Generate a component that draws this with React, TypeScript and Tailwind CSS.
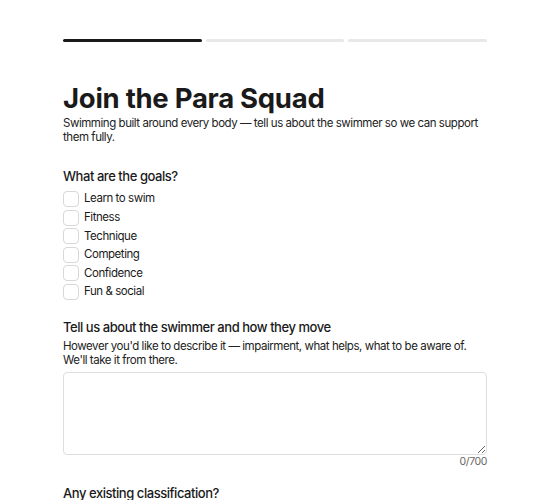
import React, { useState } from "react";

const goals = ["Learn to swim", "Fitness", "Technique", "Competing", "Confidence", "Fun & social"];

function Progress() {
  return (
    <div className="flex gap-[4px]">
      <div className="h-[3px] flex-1 rounded-full bg-[#1a1a1a]" />
      <div className="h-[3px] flex-1 rounded-full bg-[#e8e8e8]" />
      <div className="h-[3px] flex-1 rounded-full bg-[#e8e8e8]" />
    </div>
  );
}

export default function App() {
  const [checked, setChecked] = useState<Record<string, boolean>>({});
  const [about, setAbout] = useState("");

  return (
    <div
      className="min-h-screen bg-white text-[#1a1a1a]"
      style={{ fontFamily: "Inter, 'Noto Sans', sans-serif" }}
    >
      <div className="mx-auto w-[424px] pt-[39px]">
        <Progress />

        <h1 className="mt-[39px] text-[27.5px] font-bold leading-[34px] tracking-[-0.01em]">
          Join the Para Squad
        </h1>
        <p className="mt-[1px] text-[11.5px] leading-[14px] tracking-[-0.45px] text-[#222]">
          Swimming built around every body — tell us about the swimmer so we can support them fully.
        </p>

        <section className="mt-[22px]">
          <h2 className="text-[13px] font-medium leading-[20px] tracking-[-0.45px]">What are the goals?</h2>
          <div className="mt-[5px] flex flex-col gap-[2.6px]">
            {goals.map((g) => (
              <label
                key={g}
                className="flex h-[16px] items-center gap-[5px] text-[11.5px] tracking-[-0.45px]"
              >
                <input
                  type="checkbox"
                  checked={!!checked[g]}
                  onChange={() => setChecked((c) => ({ ...c, [g]: !c[g] }))}
                  className="h-[16px] w-[16px] shrink-0 appearance-none rounded-[4px] border border-[#d8d8d8] bg-white"
                />
                <span>{g}</span>
              </label>
            ))}
          </div>
        </section>

        <section className="mt-[17px]">
          <h2 className="text-[13px] font-medium leading-[20px] tracking-[-0.45px]">
            Tell us about the swimmer and how they move
          </h2>
          <p className="mt-[2px] text-[11.5px] leading-[14px] tracking-[-0.45px] text-[#222]">
            However you'd like to describe it — impairment, what helps, what to be aware of. We'll take it from there.
          </p>
          <textarea
            value={about}
            maxLength={700}
            onChange={(e) => setAbout(e.target.value)}
            className="mt-[5px] block h-[83px] w-full rounded-[4px] border border-[#dedede] bg-white p-2 text-[12px] outline-none"
          />
          <div className="text-right text-[10.5px] leading-[14px] tracking-[-0.4px] text-[#666]">
            {about.length}/700
          </div>
        </section>

        <section className="mt-[14px]">
          <h2 className="text-[13px] font-medium leading-[20px] tracking-[-0.45px]">
            Any existing classification?
          </h2>
        </section>
      </div>
    </div>
  );
}
